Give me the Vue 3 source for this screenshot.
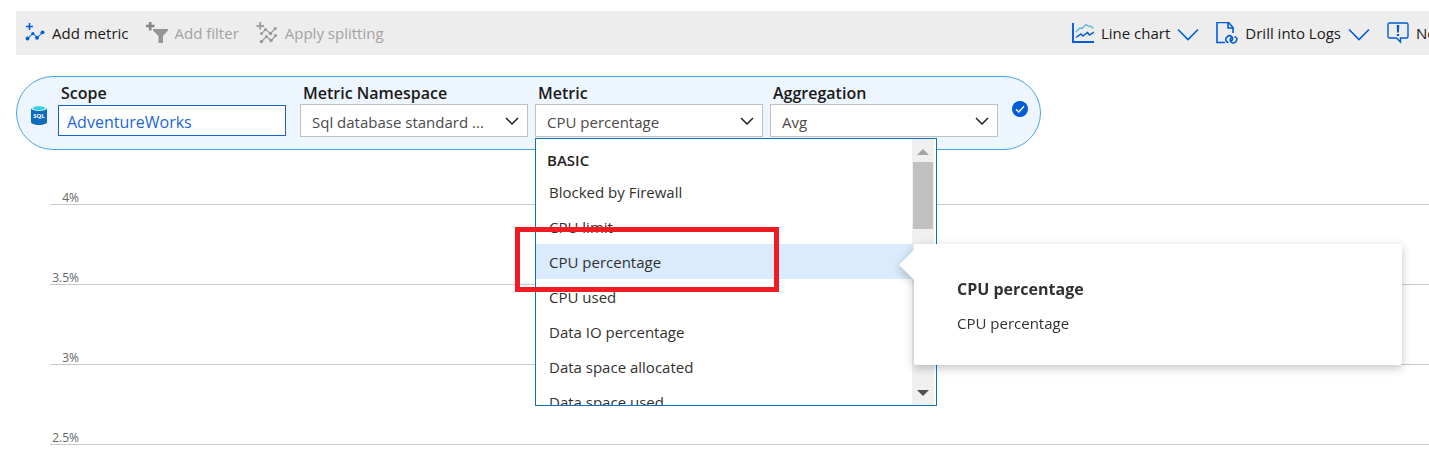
<script setup>
import { ref } from 'vue'

const scope = ref('AdventureWorks')
const namespace = ref('Sql database standard ...')
const metric = ref('CPU percentage')
const aggregation = ref('Avg')

const metrics = [
  'Blocked by Firewall',
  'CPU limit',
  'CPU percentage',
  'CPU used',
  'Data IO percentage',
  'Data space allocated',
  'Data space used',
]
const ticks = ['4%', '3.5%', '3%', '2.5%']
</script>

<template>
  <main class="page">
    <div class="toolbar" role="toolbar" aria-label="Chart actions">
      <div class="group">
        <button class="tool" type="button">
          <svg class="icon" viewBox="0 0 22 22" aria-hidden="true">
            <path d="M3 4.500h7M6.500 1v7" stroke="#015cda" stroke-width="1.600" fill="none" />
            <path d="M4.500 16.500l5.500-5 4.500 4L19.500 10.500" stroke="#3a7fe0" stroke-width="1.200" fill="none" />
            <g fill="#015cda">
              <circle cx="4.500" cy="16.500" r="1.900" /><circle cx="9.800" cy="11.500" r="1.600" />
              <circle cx="14" cy="15.800" r="1.900" /><circle cx="19.500" cy="10.300" r="1.900" />
            </g>
          </svg>
          <span>Add metric</span>
        </button>
        <button class="tool muted" type="button" disabled>
          <svg class="icon" viewBox="0 0 22 22" aria-hidden="true">
            <path d="M0 4h8.500M4.200 0v8.500" stroke="#858585" stroke-width="2.600" fill="none" />
            <path d="M7 7h15v1.500l-5 5.500v7h-4.500v-7L7 8.500z" fill="#959595" />
          </svg>
          <span>Add filter</span>
        </button>
        <button class="tool muted" type="button" disabled>
          <svg class="icon" viewBox="0 0 22 22" aria-hidden="true">
            <path d="M0.500 4h7.500M4.200 0v7.500" stroke="#a0a0a0" stroke-width="2" fill="none" />
            <path d="M5.500 11.500l4-4 5 4L19 7M5.500 19.500l5-5 4.500 4 5-5" stroke="#a0a0a0" stroke-width="1.300" fill="none" />
            <g fill="#999">
              <circle cx="5.500" cy="11.500" r="1.500" /><circle cx="9.500" cy="7.500" r="1.500" />
              <circle cx="14.500" cy="11.500" r="1.700" /><circle cx="19.200" cy="6.500" r="1.600" />
              <circle cx="5.500" cy="19.500" r="1.700" /><circle cx="10.500" cy="14.500" r="1.500" />
              <circle cx="15" cy="18.500" r="1.700" /><circle cx="19.500" cy="13.500" r="1.600" />
            </g>
          </svg>
          <span>Apply splitting</span>
        </button>
      </div>
      <div class="group">
        <button class="tool" type="button">
          <svg class="icon" viewBox="0 0 22 22" aria-hidden="true">
            <path d="M1 1v19h21" stroke="#015cda" stroke-width="1.900" fill="none" />
            <path d="M4 10l4-4 2 .5 4-4 3 2 1.500-.5 3 2.500" stroke="#59b4d9" stroke-width="1.300" fill="none" />
            <path d="M4 15.500l5-3.500 2 2 4.500-3.500 2 2.500 4.500-3" stroke="#015cda" stroke-width="1.500" fill="none" />
          </svg>
          <span>Line chart</span>
          <svg class="icon" viewBox="0 0 22 22" aria-hidden="true">
            <path d="M1 7.500l10 10 10-10" stroke="#015cda" stroke-width="1.600" fill="none" />
          </svg>
        </button>
        <button class="tool" type="button">
          <svg class="icon" viewBox="0 0 22 22" aria-hidden="true">
            <path d="M9 20.500H1V.500h11.500L17 5.500V11M12 1v5h5" stroke="#015cda" stroke-width="1.600" fill="none" />
            <g stroke="#015cda" stroke-width="1.600" fill="none">
              <path d="M12.500 20.500a3 3 0 0 1-2-5l1-1a3 3 0 0 1 4.700 3.600l-1.200 1.200" />
              <path d="M18.500 14.500a3 3 0 0 1 1.500 5l-.5.500a3 3 0 0 1-4.800-3.500l1.300-1.300" />
            </g>
          </svg>
          <span>Drill into Logs</span>
          <svg class="icon" viewBox="0 0 22 22" aria-hidden="true">
            <path d="M1 7.500l10 10 10-10" stroke="#015cda" stroke-width="1.600" fill="none" />
          </svg>
        </button>
        <button class="tool cut" type="button">
          <svg class="icon" viewBox="0 0 22 22" aria-hidden="true">
            <path d="M2.500 1h17a1.500 1.500 0 0 1 1.500 1.500v12a1.500 1.500 0 0 1-1.500 1.500h-6v4l-4-4h-7A1.500 1.500 0 0 1 1 14.500v-12A1.500 1.500 0 0 1 2.500 1z" stroke="#015cda" stroke-width="1.400" fill="none" />
            <path d="M9.700 3h2.600l-.4 7.500h-1.800zM9.900 12h2.200v2h-2.200z" fill="#015cda" />
          </svg>
          <span>New</span>
        </button>
      </div>
    </div>

    <section class="pill" aria-label="Metric selection">
      <svg class="database" viewBox="0 0 16 20" aria-hidden="true">
        <path d="M0 3v14c0 1.600 3.600 3 8 3s8-1.400 8-3V3z" fill="#0f6cbd" />
        <ellipse cx="8" cy="3" rx="8" ry="3" fill="#dff3f8" />
        <ellipse cx="8" cy="3.200" rx="6" ry="2" fill="#32d0e8" />
        <text x="8" y="13" text-anchor="middle" fill="#fff" font-size="6" font-weight="700">SQL</text>
      </svg>
      <div class="field scope">
        <label for="scope">Scope</label>
        <input id="scope" v-model="scope" type="text" />
      </div>
      <div class="field">
        <label for="namespace">Metric Namespace</label>
        <div class="select">
          <select id="namespace" v-model="namespace"><option>{{ namespace }}</option></select>
          <svg class="caret" viewBox="0 0 14 8" aria-hidden="true"><path d="M1 1l6 6 6-6" /></svg>
        </div>
      </div>
      <div class="field">
        <label for="metric">Metric</label>
        <div class="select">
          <select id="metric" v-model="metric"><option v-for="m in metrics" :key="m">{{ m }}</option></select>
          <svg class="caret" viewBox="0 0 14 8" aria-hidden="true"><path d="M1 1l6 6 6-6" /></svg>
        </div>
        <div class="menu">
          <div class="options">
            <div class="heading">BASIC</div>
            <ul role="listbox" aria-label="Basic metrics">
              <li v-for="m in metrics" :key="m" role="option" :aria-selected="m === metric" :class="{ chosen: m === metric }" @click="metric = m">{{ m }}</li>
            </ul>
          </div>
          <div class="scrollbar" aria-hidden="true">
            <svg class="arrow" viewBox="0 0 12 6"><path d="M0 6l6-6 6 6z" fill="#a3a3a3" /></svg>
            <div class="thumb"></div>
            <svg class="arrow down" viewBox="0 0 12 6"><path d="M0 0l6 6 6-6z" fill="#505050" /></svg>
          </div>
        </div>
        <div class="highlight"></div>
        <div class="tooltip" role="tooltip">
          <strong>CPU percentage</strong>
          <span>CPU percentage</span>
        </div>
      </div>
      <div class="field">
        <label for="aggregation">Aggregation</label>
        <div class="select">
          <select id="aggregation" v-model="aggregation"><option>Avg</option></select>
          <svg class="caret" viewBox="0 0 14 8" aria-hidden="true"><path d="M1 1l6 6 6-6" /></svg>
        </div>
      </div>
      <svg class="check" viewBox="0 0 16 16" aria-hidden="true">
        <circle cx="8" cy="8" r="8" fill="#015cda" />
        <path d="M4 8.300l2.800 2.700L12 5.300" stroke="#fff" stroke-width="1.500" fill="none" />
      </svg>
    </section>

    <section class="chart" aria-label="Percentage axis">
      <div v-for="t in ticks" :key="t" class="tick"><span>{{ t }}</span></div>
    </section>
  </main>
</template>

<style>
body {
  margin: 0;
  background: #fff;
  overflow: hidden;
}
</style>

<style scoped>
.page {
  padding: 11px 0 0 16px;
  font-family: "Open Sans", "Noto Sans", sans-serif;
  font-size: 15px;
  color: #323130;
}
button,
input,
select {
  font: inherit;
  margin: 0;
}
svg {
  display: block;
  flex: none;
}
.toolbar {
  display: flex;
  justify-content: space-between;
  height: 44px;
  background: #ededed;
}
.group {
  display: flex;
  align-items: center;
  gap: 17px;
  padding-left: 7px;
}
.tool {
  display: flex;
  align-items: center;
  gap: 7px;
  padding: 0;
  border: 0;
  background: none;
  color: #1b1a19;
  line-height: 24px;
  white-space: nowrap;
}
.tool.muted {
  color: #a3a3a3;
}
.tool.cut {
  width: 42px;
  overflow: hidden;
}
.icon {
  width: 22px;
  height: 22px;
}
.pill {
  display: flex;
  box-sizing: border-box;
  width: fit-content;
  height: 74px;
  margin-top: 21px;
  padding: 6px 12px 0 14px;
  border: 1px solid #4da3e6;
  border-radius: 37px;
  background: #edf5fe;
}
.database {
  width: 16px;
  height: 20px;
  margin: 22px 11px 0 0;
}
.field {
  position: relative;
  display: flex;
  flex-direction: column;
  width: 228px;
  margin-right: 7px;
}
.scope {
  margin-right: 14px;
}
.field label {
  padding-left: 3px;
  font-size: 16px;
  font-weight: 600;
  line-height: 21px;
  color: #1b1a19;
}
.field input,
.select select {
  box-sizing: border-box;
  width: 100%;
  height: 33px;
  border: 1px solid #c0c0c0;
  border-radius: 0;
  background: #fff;
  outline: none;
}
.field input {
  height: 31px;
  margin-top: 1px;
  padding: 2px 8px 0;
  border-color: #1660d0;
  color: #1b66d8;
  font-size: 16px;
}
.select {
  display: grid;
  align-items: center;
}
.select select {
  grid-area: 1 / 1;
  appearance: none;
  padding: 2px 30px 0 11px;
  color: #4a4a4a;
}
.caret {
  grid-area: 1 / 1;
  justify-self: end;
  width: 14px;
  height: 8px;
  margin-right: 9px;
  pointer-events: none;
}
.caret path {
  fill: none;
  stroke: #222;
  stroke-width: 1.5;
}
.check {
  width: 16px;
  height: 16px;
  margin: 18px 0 0 7px;
}
.menu {
  position: absolute;
  z-index: 2;
  top: 55px;
  left: 0;
  display: flex;
  box-sizing: border-box;
  width: 402px;
  height: 268px;
  border: 1px solid #0b72c4;
  background: #fff;
  overflow: hidden;
}
.options {
  flex: 1;
}
.heading {
  padding: 9px 0 2px 11px;
  font-weight: 600;
  line-height: 24px;
  color: #252423;
}
.options ul {
  margin: 0;
  padding: 0;
  list-style: none;
}
.options li {
  padding: 2px 0 0 13px;
  line-height: 33px;
}
.chosen {
  background: #d9ebfc;
}
.scrollbar {
  display: flex;
  flex-direction: column;
  align-items: center;
  width: 22px;
  margin-right: 2px;
  background: #f0f0f0;
}
.arrow {
  width: 12px;
  height: 6px;
  margin: 10px 0 7px;
}
.arrow.down {
  margin: auto 0 9px;
}
.thumb {
  width: 20px;
  height: 67px;
  background: #c1c1c1;
}
.highlight {
  position: absolute;
  z-index: 3;
  top: 144px;
  left: -20px;
  box-sizing: border-box;
  width: 264px;
  height: 65px;
  border: 5px solid #ef1c24;
  pointer-events: none;
}
.tooltip {
  position: absolute;
  z-index: 4;
  top: 161px;
  left: 379px;
  display: flex;
  flex-direction: column;
  gap: 10px;
  box-sizing: border-box;
  width: 488px;
  padding: 33px 43px 30px;
  border-radius: 2px;
  background: #fff;
  line-height: 24px;
  filter: drop-shadow(0 3px 5px rgba(0, 0, 0, 0.24));
}
.tooltip::before {
  content: "";
  position: absolute;
  top: 6px;
  left: -15px;
  width: 15px;
  height: 30px;
  background: #fff;
  clip-path: polygon(100% 0, 0 50%, 100% 100%);
}
.tooltip strong {
  font-size: 16px;
}
.chart {
  padding-left: 34px;
}
.tick {
  display: flex;
  align-items: flex-end;
  box-sizing: border-box;
  height: 80px;
  border-bottom: 1px solid #c8c8c8;
  font-size: 12px;
  line-height: 13px;
  color: #666;
}
.tick:first-child {
  height: 55px;
}
.tick span {
  width: 29px;
  text-align: right;
}
</style>
